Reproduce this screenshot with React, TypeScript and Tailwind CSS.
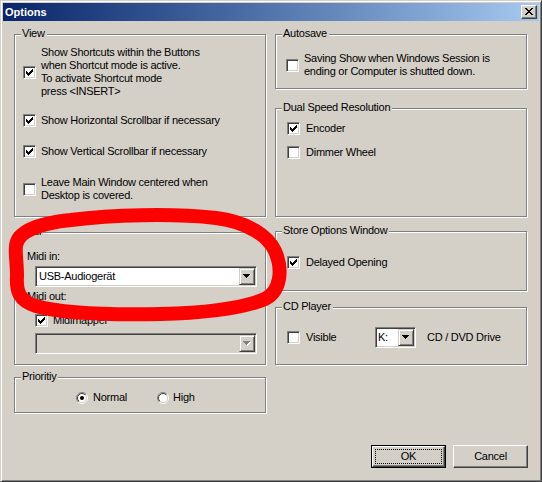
import React from 'react';

const CHECK_COLS = [2, 3, 4, 3, 2, 1, 0];
const checkPath = CHECK_COLS.map((t, c) => `M${c} ${t}h1v3h-1z`).join(' ');
const arrowPath = 'M0 0h7v1h-7z M1 1h5v1h-5z M2 2h3v1h-3z M3 3h1v1h-1z';
const closePath =
  'M0 0h2v1h-2z M6 0h2v1h-2z M1 1h2v1h-2z M5 1h2v1h-2z M2 2h4v1h-4z M3 3h2v1h-2z M2 4h4v1h-4z M1 5h2v1h-2z M5 5h2v1h-2z M0 6h2v1h-2z M6 6h2v1h-2z';

function Check({ checked }: { checked?: boolean }) {
  return (
    <div className="relative w-[13px] h-[13px] shrink-0 bg-white border border-t-[#808080] border-l-[#808080] border-r-white border-b-white shadow-[inset_1px_1px_0_#404040,inset_-1px_-1px_0_#d4d0c8]">
      {checked && (
        <svg className="absolute left-[2px] top-[2px]" width="7" height="7" viewBox="0 0 7 7">
          <path d={checkPath} fill="#000" />
        </svg>
      )}
    </div>
  );
}

function Radio({ checked }: { checked?: boolean }) {
  return (
    <svg width="12" height="12" viewBox="0 0 12 12" className="shrink-0">
      <defs>
        <linearGradient id="radio-out" x1="0" y1="0" x2="1" y2="1">
          <stop offset="0.5" stopColor="#808080" />
          <stop offset="0.5" stopColor="#ffffff" />
        </linearGradient>
        <linearGradient id="radio-in" x1="0" y1="0" x2="1" y2="1">
          <stop offset="0.5" stopColor="#404040" />
          <stop offset="0.5" stopColor="#d4d0c8" />
        </linearGradient>
      </defs>
      <circle cx="6" cy="6" r="5.5" fill="none" stroke="url(#radio-out)" />
      <circle cx="6" cy="6" r="4.5" fill="#fff" stroke="url(#radio-in)" />
      {checked && <circle cx="6" cy="6" r="2" fill="#000" />}
    </svg>
  );
}

function DropButton({ disabled }: { disabled?: boolean }) {
  return (
    <div className="ml-auto w-[16px] h-[17px] shrink-0 flex items-center justify-center bg-[#d4d0c8] border border-t-[#d4d0c8] border-l-[#d4d0c8] border-r-[#404040] border-b-[#404040] shadow-[inset_1px_1px_0_#fff,inset_-1px_-1px_0_#808080]">
      <svg width="8" height="5" viewBox="0 0 8 5">
        {disabled && <path d={arrowPath} fill="#fff" transform="translate(1 1)" />}
        <path d={arrowPath} fill={disabled ? '#808080' : '#000'} />
      </svg>
    </div>
  );
}

function Combo({ text, disabled, className }: { text?: string; disabled?: boolean; className: string }) {
  return (
    <div
      className={`flex items-center h-[21px] p-[1px] border border-t-[#808080] border-l-[#808080] border-r-white border-b-white shadow-[inset_1px_1px_0_#404040,inset_-1px_-1px_0_#d4d0c8] ${
        disabled ? 'bg-[#d4d0c8]' : 'bg-white'
      } ${className}`}
    >
      {text && <span className="pl-[2px] whitespace-nowrap">{text}</span>}
      <DropButton disabled={disabled} />
    </div>
  );
}

function Group({ label, className, children }: { label: string; className: string; children?: React.ReactNode }) {
  return (
    <div className={`relative shrink-0 border border-[#808080] shadow-[1px_1px_0_#fff,inset_1px_1px_0_#fff] ${className}`}>
      <span className="absolute left-[6px] top-[-8px] pl-[1px] pr-[2px] bg-[#d4d0c8] whitespace-nowrap">{label}</span>
      {children}
    </div>
  );
}

function CheckRow({ checked, gap, children, className = '' }: { checked?: boolean; gap: string; children: React.ReactNode; className?: string }) {
  return (
    <div className={`flex items-center ${gap} ${className}`}>
      <Check checked={checked} />
      <span className="whitespace-nowrap">{children}</span>
    </div>
  );
}

function Button({ label, isDefault }: { label: string; isDefault?: boolean }) {
  if (isDefault) {
    return (
      <div className="w-[75px] h-[23px] border border-black">
        <div className="relative h-full flex items-center justify-center border border-t-white border-l-white border-r-[#404040] border-b-[#404040] shadow-[inset_-1px_-1px_0_#808080]">
          <div className="absolute inset-[2px] border border-dotted border-black" />
          {label}
        </div>
      </div>
    );
  }
  return (
    <div className="w-[75px] h-[23px] flex items-center justify-center border border-t-white border-l-white border-r-[#404040] border-b-[#404040] shadow-[inset_-1px_-1px_0_#808080]">
      {label}
    </div>
  );
}

export default function App() {
  return (
    <div className="relative w-[542px] h-[482px] overflow-hidden bg-[#d4d0c8] text-black text-[11px] leading-[13px] tracking-[-0.25px] font-[Liberation_Sans,Arial,sans-serif] border border-t-[#d4d0c8] border-l-[#d4d0c8] border-r-[#404040] border-b-[#404040] shadow-[inset_1px_1px_0_#fff,inset_-1px_-1px_0_#808080] p-[2px]">
      {/* title bar */}
      <div className="flex items-center h-[18px] pl-[2px] pr-[2px] bg-linear-to-r from-[#0a246a] to-[#a6caf0]">
        <span className="font-bold text-white tracking-normal">Options</span>
        <div className="relative ml-auto w-[16px] h-[14px] bg-[#d4d0c8] border border-t-white border-l-white border-r-[#404040] border-b-[#404040] shadow-[inset_-1px_-1px_0_#808080]">
          <svg className="absolute left-[3px] top-[2px]" width="8" height="7" viewBox="0 0 8 7">
            <path d={closePath} fill="#000" />
          </svg>
        </div>
      </div>

      {/* body */}
      <div className="flex gap-[9px] pl-[11px] mt-[13px]">
        <div className="flex flex-col w-[252px]">
          <Group label="View" className="h-[183px] pl-[8px] pt-[11px]">
            <div className="flex items-center gap-[5px]">
              <Check checked />
              <span className="whitespace-nowrap">
                Show Shortcuts within the Buttons
                <br />
                when Shortcut mode is active.
                <br />
                To activate Shortcut mode
                <br />
                press &lt;INSERT&gt;
              </span>
            </div>
            <CheckRow checked gap="gap-[5px]" className="mt-[16px]">
              Show Horizontal Scrollbar if necessary
            </CheckRow>
            <CheckRow checked gap="gap-[5px]" className="mt-[18px]">
              Show Vertical Scrollbar if necessary
            </CheckRow>
            <div className="flex items-center gap-[5px] mt-[18px]">
              <Check />
              <span className="whitespace-nowrap">
                Leave Main Window centered when
                <br />
                Desktop is covered.
              </span>
            </div>
          </Group>

          <Group label="Midi" className="h-[133px] mt-[15px] pl-[12px] pt-[17px]">
            <div>Midi in:</div>
            <Combo text="USB-Audiogerät" className="ml-[8px] mt-[3px] w-[222px]" />
            <div className="mt-[3px]">Midi out:</div>
            <CheckRow checked gap="gap-[5px]" className="ml-[8px] mt-[11px]">
              Midimapper
            </CheckRow>
            <Combo disabled className="ml-[8px] mt-[6px] w-[222px]" />
          </Group>

          <Group label="Prioritiy" className="h-[36px] mt-[12px] pl-[61px] pt-[13px]">
            <div className="flex items-center">
              <div className="flex items-center gap-[5px] w-[81px]">
                <Radio checked />
                <span>Normal</span>
              </div>
              <div className="flex items-center gap-[4px]">
                <Radio />
                <span>High</span>
              </div>
            </div>
          </Group>
        </div>

        <div className="flex flex-col w-[252px]">
          <Group label="Autosave" className="h-[55px] pl-[10px] pt-[17px]">
            <div className="flex items-center gap-[5px]">
              <Check />
              <span className="whitespace-nowrap">
                Saving Show when Windows Session is
                <br />
                ending or Computer is shutted down.
              </span>
            </div>
          </Group>

          <Group label="Dual Speed Resolution" className="h-[109px] mt-[19px] pl-[11px] pt-[13px]">
            <CheckRow checked gap="gap-[6px]">Encoder</CheckRow>
            <CheckRow gap="gap-[6px]" className="mt-[11px]">
              Dimmer Wheel
            </CheckRow>
          </Group>

          <Group label="Store Options Window" className="h-[60px] mt-[14px] pl-[11px] pt-[24px]">
            <CheckRow checked gap="gap-[6px]">Delayed Opening</CheckRow>
          </Group>

          <Group label="CD Player" className="h-[58px] mt-[16px] pl-[11px] pt-[19px]">
            <div className="flex items-center h-[21px]">
              <CheckRow gap="gap-[6px]" className="w-[88px]">
                Visible
              </CheckRow>
              <Combo text="K:" className="w-[41px] [&>span]:pl-[1px]" />
              <span className="ml-[11px] whitespace-nowrap">CD / DVD Drive</span>
            </div>
          </Group>
        </div>
      </div>

      {/* buttons */}
      <div className="flex justify-end gap-[7px] pr-[11px] mt-[32px]">
        <Button label="OK" isDefault />
        <Button label="Cancel" />
      </div>

      {/* red freehand marker over the Midi group */}
      <svg className="absolute left-0 top-0 pointer-events-none" width="542" height="482" viewBox="0 0 542 482">
        <path
          d="M 15 245 C 16 230, 40 222, 70 219 C 110 214, 170 212, 215 217 C 247 221, 267 235, 274 250 C 282 268, 280 290, 264 298 C 240 308, 200 312, 160 313 C 110 314, 60 312, 35 305 C 18 300, 15 290, 16 275 C 16 262, 14 252, 15 245 Z"
          fill="none"
          stroke="#ff0000"
          strokeWidth="14"
          strokeLinejoin="round"
        />
      </svg>
    </div>
  );
}
